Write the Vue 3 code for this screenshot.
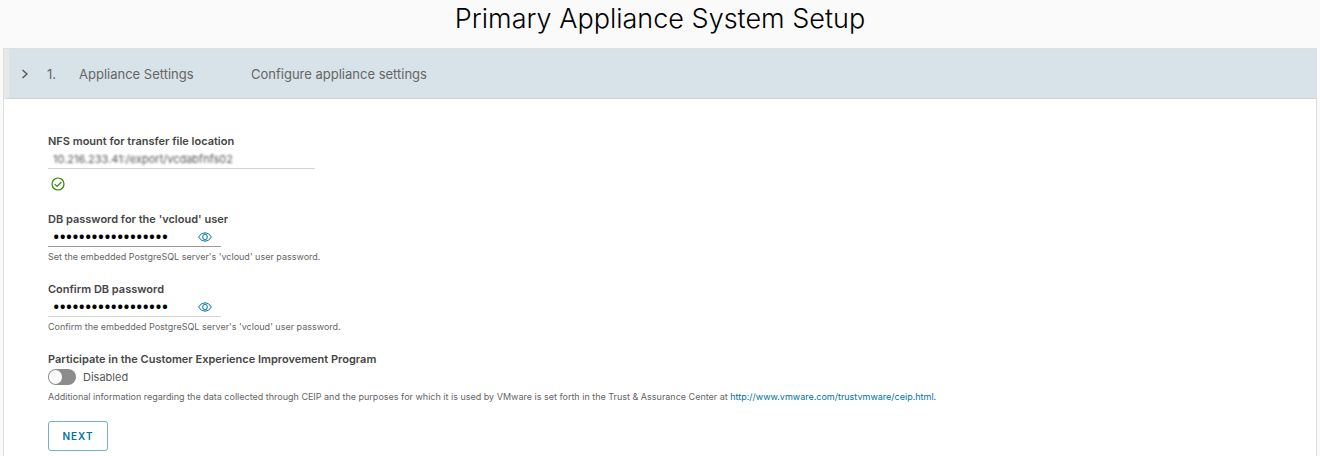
<script setup>
import { ref, reactive } from 'vue'

const mount = ref('10.216.233.41:/export/vcdabfnfs02')
const ceip = ref(false)
const passwords = reactive([
  {
    id: 'db-password',
    label: "DB password for the 'vcloud' user",
    help: "Set the embedded PostgreSQL server's 'vcloud' user password.",
    value: 'vcloud-appliance-1',
    shown: false,
    strong: true
  },
  {
    id: 'db-confirm',
    label: 'Confirm DB password',
    help: "Confirm the embedded PostgreSQL server's 'vcloud' user password.",
    value: 'vcloud-appliance-1',
    shown: false,
    strong: false
  }
])
</script>

<template>
  <main class="page">
    <h1>Primary Appliance System Setup</h1>
    <section class="panel">
      <button type="button" class="step">
        <svg class="caret" viewBox="0 0 8 10" aria-hidden="true"><path d="M1.5 1l4.5 4-4.5 4" /></svg>
        <span class="number">1.</span>
        <span class="name">Appliance Settings</span>
        <span>Configure appliance settings</span>
      </button>

      <form class="body" @submit.prevent>
        <div class="field mount">
          <label for="nfs">NFS mount for transfer file location</label>
          <div class="control"><input id="nfs" v-model="mount" class="redacted" type="text" /></div>
          <svg class="valid" viewBox="0 0 14 14" role="img" aria-label="Valid">
            <circle cx="7" cy="7" r="6" />
            <path d="M3.8 7.2l2.3 2.3 4.3-4.5" />
          </svg>
        </div>

        <div v-for="p in passwords" :key="p.id" class="field">
          <label :for="p.id">{{ p.label }}</label>
          <div class="control secret" :class="{ strong: p.strong }">
            <input :id="p.id" v-model="p.value" :type="p.shown ? 'text' : 'password'" />
            <button type="button" class="eye" aria-label="Show password" @click="p.shown = !p.shown">
              <svg viewBox="0 0 14 10" aria-hidden="true">
                <path d="M.7 5C2.2 2.3 4.4.9 7 .9S11.8 2.3 13.3 5C11.8 7.7 9.6 9.1 7 9.1S2.2 7.7.7 5z" />
                <ellipse cx="7" cy="5" rx="2.3" ry="2.9" />
              </svg>
            </button>
          </div>
          <p class="help">{{ p.help }}</p>
        </div>

        <div class="field">
          <label for="ceip">Participate in the Customer Experience Improvement Program</label>
          <div class="toggle">
            <input id="ceip" v-model="ceip" type="checkbox" role="switch" />
            <span>{{ ceip ? 'Enabled' : 'Disabled' }}</span>
          </div>
          <p class="help">
            Additional information regarding the data collected through CEIP and the purposes for which it is used by VMware is set forth in the Trust &amp; Assurance Center at
            <a href="http://www.vmware.com/trustvmware/ceip.html">http://www.vmware.com/trustvmware/ceip.html.</a>
          </p>
        </div>

        <button type="submit" class="next">NEXT</button>
      </form>
    </section>
  </main>
</template>

<style>
body {
  background: #fafafa;
}
</style>

<style scoped>
.page {
  padding: 0 3px;
  overflow: hidden;
  font-family: Inter, "Open Sans", sans-serif;
  font-size: 11px;
  color: #565656;
}
h1 {
  margin: 0;
  height: 48px;
  line-height: 37px;
  text-align: center;
  font-size: 27px;
  font-weight: 300;
  color: #000;
}
input,
button {
  font-family: inherit;
}
.panel {
  border: 1px solid #dedede;
  border-bottom: 0;
  background: #fff;
}
.step {
  display: flex;
  align-items: center;
  width: 100%;
  height: 50px;
  padding: 0 12px;
  border: 0;
  border-left: 5px solid #e8e8e8;
  border-bottom: 1px solid #ccd2d6;
  background: #d8e2e9;
  color: #666;
  font-size: 13px;
  text-align: left;
}
.caret {
  width: 8px;
  height: 10px;
  margin-right: 18px;
  fill: none;
  stroke: #565656;
  stroke-width: 1.4;
}
.number {
  width: 32px;
}
.name {
  width: 172px;
}
.body {
  padding: 34px 44px 5px;
}
.field {
  margin-bottom: 17px;
}
label {
  display: block;
  line-height: 16px;
  font-weight: 600;
  color: #454545;
}
.control {
  display: flex;
  align-items: center;
  width: 267px;
  height: 20px;
  box-sizing: border-box;
  border-bottom: 1px solid #d4d4d4;
}
.secret {
  width: 173px;
}
.strong {
  border-color: #9a9a9a;
}
.control input {
  flex: 1;
  min-width: 0;
  height: 18px;
  padding: 0 5px;
  border: 0;
  outline: 0;
  background: transparent;
  color: #000;
  font-size: 11px;
}
.control input[type="password"] {
  font-family: "Open Sans", sans-serif;
  font-size: 17px;
  font-weight: 600;
}
.control .redacted {
  color: #555;
  filter: blur(1px);
}
.valid {
  display: block;
  width: 14px;
  height: 14px;
  margin: 8px 3px 0;
  fill: none;
  stroke: #318700;
  stroke-width: 1.2;
}
.mount {
  margin-bottom: 20px;
}
.eye {
  display: flex;
  margin-right: 9px;
  padding: 0;
  border: 0;
  background: transparent;
}
.eye svg {
  width: 14px;
  height: 10px;
  fill: none;
  stroke: #0072a3;
  stroke-width: 1;
}
.help {
  margin: 3px 0 0;
  line-height: 14px;
  font-size: 9px;
  color: #666;
}
a {
  color: #0072a3;
  text-decoration: none;
}
.toggle {
  display: flex;
  align-items: center;
  gap: 7px;
  height: 20px;
}
.toggle input {
  appearance: none;
  display: flex;
  width: 28px;
  height: 16px;
  margin: 0;
  padding: 1px;
  border-radius: 8px;
  background: #8c8c8c;
}
.toggle input::before {
  content: "";
  width: 13px;
  height: 14px;
  border-radius: 7px;
  background: #fafafa;
}
.toggle input:checked {
  justify-content: flex-end;
  background: #318700;
}
.next {
  display: block;
  width: 60px;
  height: 30px;
  padding: 0;
  border: 1px solid #6fb3d0;
  border-radius: 3px;
  background: #fff;
  color: #0072a3;
  font-size: 10px;
  font-weight: 600;
  letter-spacing: 1px;
}
</style>
